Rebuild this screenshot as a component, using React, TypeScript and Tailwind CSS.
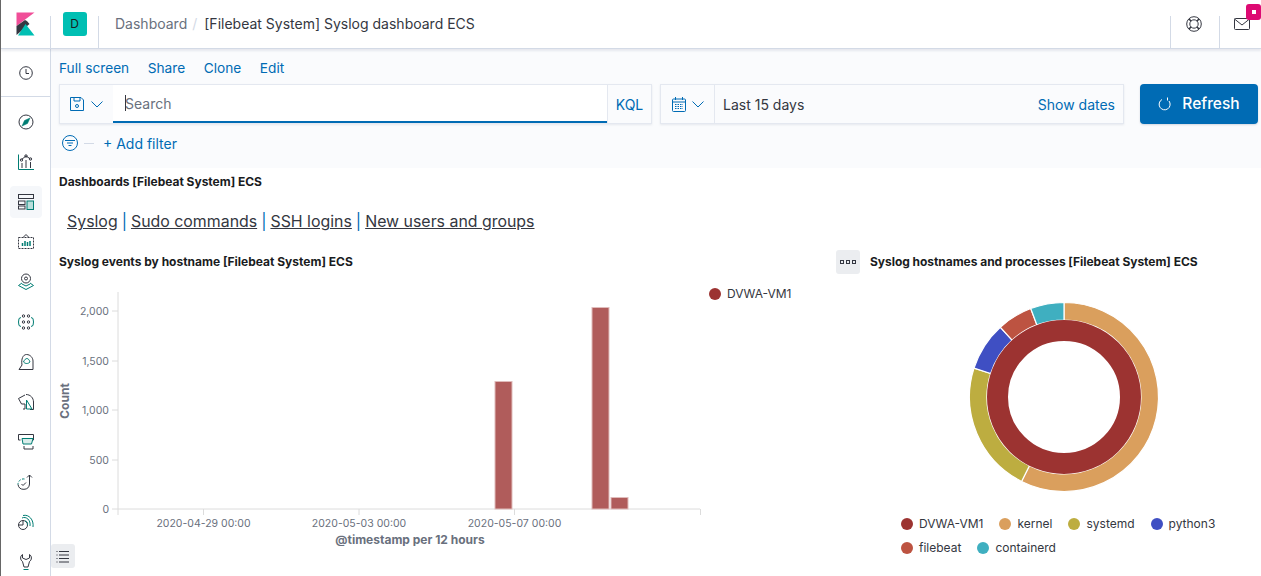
import React from 'react';

const D = '#343741';
const T = '#017d73';

const Icon: React.FC<{ children: React.ReactNode; size?: number }> = ({ children, size = 18 }) => (
  <svg width={size} height={size} viewBox="0 0 18 18" fill="none" stroke={D} strokeWidth="1">
    {children}
  </svg>
);

const navIcons: React.ReactNode[] = [
  <>
    <circle cx="9" cy="9" r="7" />
    <path d="M13 5 L10.5 10.5 L5 13 L7.5 7.5 Z" fill={T} stroke={T} strokeWidth="0.5" />
  </>,
  <>
    <path d="M1.5 1.5 V16.5 H17" stroke={T} />
    <path d="M4.5 6.5 L9 3 L13.5 6" />
    <circle cx="4.5" cy="7" r="1.2" />
    <circle cx="9" cy="3" r="1.2" />
    <circle cx="13.5" cy="6" r="1.2" />
    <path d="M5 10 V15 M9 7 V15 M13.5 9 V15" />
  </>,
  <>
    <rect x="1.5" y="1.5" width="15" height="4" />
    <rect x="1.5" y="8" width="6.5" height="3.5" />
    <rect x="1.5" y="13" width="6.5" height="3" />
    <rect x="10" y="8" width="6.5" height="8.5" stroke={T} fill="#b9dedb" />
  </>,
  <>
    <path d="M1.5 4.5 H16.5 V15.5 H1.5 Z" strokeDasharray="2 1" />
    <path d="M6 4.5 L9 1.5 L12 4.5" />
    <path d="M5.5 13 V10 M8 13 V8 M10.5 13 V9 M13 13 V8" stroke={T} strokeWidth="1.5" />
  </>,
  <>
    <circle cx="9" cy="5.5" r="4.5" />
    <circle cx="9" cy="5.5" r="1.5" />
    <path d="M5 10 L1.5 12.5 L9 16.5 L16.5 12.5 L13 10" stroke={T} />
    <path d="M5 11 L9 13 L13 11" stroke={T} />
  </>,
  <>
    <circle cx="6.5" cy="3" r="1.2" />
    <circle cx="11.5" cy="3" r="1.2" />
    <circle cx="6.5" cy="9" r="1.2" />
    <circle cx="11.5" cy="9" r="1.2" />
    <circle cx="6.5" cy="15" r="1.2" />
    <circle cx="11.5" cy="15" r="1.2" />
    <path d="M4 4.5 L2 5.5 Q1 9 2 12.5 L4 13.5 M14 4.5 L16 5.5 Q17 9 16 12.5 L14 13.5" stroke={T} />
  </>,
  <>
    <path d="M2 16.5 L5 12 C4 6 6 1.5 9.5 1.5 C13.5 1.5 16 5 16 8 V16.5 Z" />
    <path d="M6.5 9 C7.5 6.5 9 5.5 10 5.5 C11 5.5 12.5 7 13 9 C11 11 8.5 11 6.5 9 Z" stroke={T} />
  </>,
  <>
    <path d="M9 1.5 C13.5 1.5 16.5 5 16.5 9 V16.5 H13" />
    <path d="M8 2 L1.5 5.5 L4.5 11 L8 11 V16 H6" />
    <path d="M9.5 7 L15 16 H9.5 Z" stroke={T} />
  </>,
  <>
    <path d="M3.5 7 H1.5 V1.5 H16.5 V7 H15" />
    <path d="M5 5.5 H16 L14.5 11 H6 Z" stroke={T} fill="#d9ecea" />
    <path d="M7 13 V16 H16 V13" />
  </>,
  <>
    <path d="M7.5 6 A5.5 5.5 0 0 0 1 11.5" stroke={T} strokeDasharray="2.5 1.5" />
    <path d="M12.5 2 V11 A5.8 5.8 0 0 1 1 11.5" />
    <path d="M10 4.5 L12.5 2 L15 4.5" />
    <path d="M4.5 11 L6 12.5 L9 9.5" />
  </>,
  <>
    <circle cx="6" cy="12" r="4.5" />
    <path d="M6 7.5 V12 H1.5" />
    <path d="M5 5 C9 3 14 7 13 13" stroke={T} />
    <path d="M6 2.5 C12 1 17 7 16 14" stroke={T} />
    <path d="M8 8 C10 8 11 10 10.5 12" stroke={T} />
  </>,
  <>
    <path d="M5.5 1.5 C3 3 3 7 5.5 8.5 L7 14 H11 L12.5 8.5 C15 7 15 3 12.5 1.5 V5 L9 6.5 L5.5 5 Z" />
    <path d="M6.5 16.5 H11.5" stroke={T} />
  </>,
];

const ListIcon = () => (
  <svg width="14" height="14" viewBox="0 0 14 14" stroke={D} strokeWidth="1">
    <path d="M3 2.5 H13 M3 6 H13 M3 9.5 H13 M3 13 H13" />
    <path d="M0.5 2.5 H1.5 M0.5 6 H1.5 M0.5 9.5 H1.5 M0.5 13 H1.5" />
  </svg>
);

const Chevron: React.FC = () => (
  <svg width="12" height="7" viewBox="0 0 12 7" fill="none" stroke="#006bb4" strokeWidth="1">
    <path d="M0.5 0.5 L6 6 L11.5 0.5" />
  </svg>
);

const polar = (r: number, deg: number) => {
  const a = ((deg - 90) * Math.PI) / 180;
  return `${(100 + r * Math.cos(a)).toFixed(2)} ${(100 + r * Math.sin(a)).toFixed(2)}`;
};

const arc = (r0: number, r1: number, from: number, to: number) => {
  const large = to - from > 180 ? 1 : 0;
  return `M${polar(r1, from)} A${r1} ${r1} 0 ${large} 1 ${polar(r1, to)} L${polar(r0, to)} A${r0} ${r0} 0 ${large} 0 ${polar(r0, from)} Z`;
};

const segments = [
  { from: 0, to: 206.7, color: '#da9f5d' },
  { from: 206.7, to: 287.8, color: '#bdad40' },
  { from: 287.8, to: 317.6, color: '#3f4fc3' },
  { from: 317.6, to: 339.4, color: '#bd5341' },
  { from: 339.4, to: 360, color: '#3fafc0' },
];

const legend = [
  { name: 'DVWA-VM1', color: '#9c3331' },
  { name: 'kernel', color: '#da9f5d' },
  { name: 'systemd', color: '#bdad40' },
  { name: 'python3', color: '#3f4fc3' },
  { name: 'filebeat', color: '#bd5341' },
  { name: 'containerd', color: '#3fafc0' },
];

const BarChart = () => {
  const axis = '#dcdcdc';
  const label = { fontSize: 10.5, fill: '#69707d' };
  return (
    <svg width="690" height="270" viewBox="51 276 690 270" className="block" fontFamily="Inter, sans-serif">
      <path d="M118 292 V515 M112 311 H118 M112 361 H118 M112 410 H118 M112 460 H118 M112 509 H700 M203.5 509 V515 M359 509 V515 M514.5 509 V515 M700.5 509 V515" stroke={axis} fill="none" />
      {[['2,000', 311], ['1,500', 361], ['1,000', 410], ['500', 460], ['0', 509]].map(([t, y]) => (
        <text key={t} x="109" y={Number(y) + 4} textAnchor="end" {...label}>{t}</text>
      ))}
      {[['2020-04-29 00:00', 203.5], ['2020-05-03 00:00', 359], ['2020-05-07 00:00', 514.5]].map(([t, x]) => (
        <text key={t} x={x} y="527" textAnchor="middle" {...label}>{t}</text>
      ))}
      <text x="410" y="544" textAnchor="middle" fontSize="12" fontWeight="700" fill="#69707d">@timestamp per 12 hours</text>
      <text transform="translate(69 401) rotate(-90)" textAnchor="middle" fontSize="12" fontWeight="700" fill="#69707d">Count</text>
      <g fill="#b05c5b" stroke="#e0bcbb">
        <rect x="495" y="381.5" width="17" height="127.5" />
        <rect x="592" y="307.5" width="17" height="201.5" />
        <rect x="611" y="497.5" width="17" height="11.5" />
      </g>
    </svg>
  );
};

export default function App() {
  return (
    <div className="w-[1261px] h-[576px] overflow-hidden flex flex-col bg-white text-[14px] text-[#343741] font-['Inter',sans-serif] border-l border-[#666] relative">
      <header className="h-[49px] shrink-0 flex border-b border-[#d3dae6] shadow-[0_2px_2px_rgba(152,162,179,0.2)] relative z-10 bg-white">
        <div className="w-[50px] flex items-center justify-center border-r border-[#d3dae6] mt-[16px] pb-[16px]">
          <svg width="19" height="24" viewBox="0 0 19 24" className="-mt-[1px]">
            <path d="M0.5 0.5 H18.5 L0.5 14 Z" fill="#f04e98" />
            <path d="M0.5 14 L9 8 C11 9 12.5 10.5 13.5 12 L0.5 23 Z" fill="#343741" />
            <path d="M2 23.5 L9.5 12 L18.5 23.5 Z" fill="#00bfb3" />
          </svg>
        </div>
        <div className="w-[48px] flex items-center justify-center border-r border-[#d3dae6] mt-[16px] pb-[16px]">
          <div className="w-6 h-6 shrink-0 rounded-[3px] bg-[#00bfb3] flex items-center justify-center text-[12px] text-[#1a1c21] -mt-[1px]">D</div>
        </div>
        <div className="flex items-center pl-[16px] pb-[1px]">
          <span className="text-[#69707d]">Dashboard</span>
          <span className="text-[#d3dae6] ml-[5px]">/</span>
          <span className="ml-[7px]">[Filebeat System] Syslog dashboard ECS</span>
        </div>
        <div className="ml-auto flex">
          <div className="w-[49px] flex items-center justify-center border-l border-[#d3dae6] mt-[16px] pb-[16px]">
            <svg width="16" height="16" viewBox="0 0 16 16" fill="none" stroke={D} strokeWidth="1" className="-ml-[3px]">
              <circle cx="8" cy="8" r="7.3" />
              <circle cx="8" cy="8" r="4.2" />
              <path d="M3 3 L5 5 M13 3 L11 5 M3 13 L5 11 M13 13 L11 11" strokeWidth="1.6" />
            </svg>
          </div>
          <div className="w-[42px] flex pl-[14px] border-l border-[#d3dae6] mt-[16px] pt-[2px] relative">
            <svg width="16" height="12" viewBox="0 0 16 12" fill="none" stroke={D} strokeWidth="1">
              <rect x="0.5" y="0.5" width="15" height="11" rx="1" />
              <path d="M0.5 1 L8 7 L15.5 1" />
            </svg>
          </div>
        </div>
        <div className="absolute right-0 top-[4px] w-[15px] h-[16px] rounded-[3px] bg-[#dd0a73] flex items-center justify-center">
          <div className="w-[4px] h-[4px] bg-white" />
        </div>
      </header>

      <div className="flex flex-1 min-h-0">
        <aside className="w-[50px] shrink-0 border-r border-[#d3dae6]">
          <div className="h-[48px] flex items-center justify-center border-b border-[#d3dae6]">
            <svg width="14" height="14" viewBox="0 0 14 14" fill="none" stroke={D} strokeWidth="1">
              <circle cx="7" cy="7" r="6.3" />
              <path d="M7 3 V7.5 H10" />
            </svg>
          </div>
          <div className="pt-[5px] flex flex-col">
            {navIcons.map((icon, i) => (
              <div key={i} className="h-10 flex items-center justify-center">
                <div className={`w-8 h-8 rounded-[4px] flex items-center justify-center ${i === 2 ? 'bg-[#f5f7fa]' : ''}`}>
                  <Icon>{icon}</Icon>
                </div>
              </div>
            ))}
          </div>
        </aside>

        <main className="flex-1 min-w-0 flex flex-col">
          <div className="h-[119px] shrink-0 bg-[#fafbfd] pl-[8px] pr-[2px]">
            <div className="flex gap-[18.5px] pt-[9px] h-[35px] text-[13.7px] text-[#006bb4]">
              <span>Full screen</span>
              <span>Share</span>
              <span>Clone</span>
              <span>Edit</span>
            </div>
            <div className="flex">
              <div className="w-[593px] h-[40px] shrink-0 flex border border-[#e4e8f0] shadow-[0_1px_2px_rgba(152,162,179,0.2)]">
                <div className="w-[53px] flex items-center justify-center gap-[7px] pr-[1px]">
                  <svg width="14" height="14" viewBox="0 0 14 14" fill="none" stroke="#006bb4" strokeWidth="1">
                    <path d="M0.5 0.5 H11 L13.5 3 V13.5 H0.5 Z" />
                    <path d="M4 0.5 V4 H10 V0.5" />
                    <circle cx="7" cy="9" r="1.5" />
                  </svg>
                  <Chevron />
                </div>
                <div className="flex-1 bg-white border-b-2 border-[#006bb4] flex items-center pl-[12px] relative">
                  <span className="absolute left-[12px] top-[10px] w-px h-[16px] bg-[#343741]" />
                  <span className="text-[#69707d]">Search</span>
                </div>
                <div className="w-[44px] flex items-center justify-center text-[#006bb4] border-l border-[#e4e8f0]">KQL</div>
              </div>
              <div className="w-[464px] h-[40px] shrink-0 ml-[8px] flex items-center border border-[#e4e8f0] shadow-[0_1px_2px_rgba(152,162,179,0.2)]">
                <div className="w-[54px] h-full flex items-center justify-center gap-[6px] border-r border-[#e4e8f0]">
                  <svg width="14" height="15" viewBox="0 0 14 15" fill="none" stroke="#006bb4" strokeWidth="1">
                    <rect x="0.5" y="2" width="13" height="12.5" rx="1" />
                    <path d="M0.5 5 H13.5 M3.5 0 V3 M10.5 0 V3" />
                    <path d="M3 7.5 H11 M3 9.5 H11 M3 11.5 H11" strokeDasharray="1.5 1" />
                  </svg>
                  <Chevron />
                </div>
                <span className="pl-[8px]">Last 15 days</span>
                <span className="ml-auto pr-[8px] text-[#006bb4]">Show dates</span>
              </div>
              <div className="w-[118px] h-[40px] shrink-0 ml-[16px] rounded-[4px] bg-[#006bb4] text-white flex items-center justify-center gap-[11px] text-[15.5px] font-medium shadow-[0_1px_2px_rgba(152,162,179,0.4)]">
                <svg width="13" height="14" viewBox="0 0 13 14" fill="none" stroke="#fff" strokeWidth="1">
                  <path d="M4 2.5 A5.5 5.5 0 1 0 11 4 M9.5 0.5 V3.5" />
                </svg>
                <span>Refresh</span>
              </div>
            </div>
            <div className="flex items-center h-[20px] mt-[9px] pl-[3px] text-[#006bb4]">
              <svg width="16" height="16" viewBox="0 0 16 16" fill="none" stroke="#006bb4" strokeWidth="1">
                <circle cx="8" cy="8" r="7.5" />
                <path d="M3 5.5 H13 M5 8 H11 M6.5 10.5 H9.5" />
              </svg>
              <span className="w-[10px] h-px bg-[#d3dae6] ml-[6px]" />
              <span className="ml-[9px]">+ Add filter</span>
            </div>
          </div>

          <div className="px-[8px] pt-[6px] h-[82px] shrink-0">
            <div className="text-[12px] font-bold text-[#1a1c21] leading-[16px] tracking-[-0.02px]">Dashboards [Filebeat System] ECS</div>
            <div className="pl-[8px] pt-[20px] text-[15.9px] leading-[24px] flex">
              <span className="underline text-[#343741]">Syslog</span>
              <span className="ml-[4px] mr-[4px] text-[#006bb4]">|</span>
              <span className="underline">Sudo commands</span>
              <span className="ml-[4px] mr-[4px] text-[#006bb4]">|</span>
              <span className="underline">SSH logins</span>
              <span className="ml-[4px] mr-[4px] text-[#006bb4]">|</span>
              <span className="underline">New users and groups</span>
            </div>
          </div>

          <div className="flex flex-1 min-h-0">
            <section className="w-[785px] shrink-0 relative">
              <div className="pl-[8px] text-[12px] font-bold text-[#1a1c21] leading-[16px] h-[24px] flex items-center">Syslog events by hostname [Filebeat System] ECS</div>
              <div className="flex mt-[2px]">
                <BarChart />
                <div className="flex items-center h-[18px] ml-[-32px] mt-[9px] gap-[6px] text-[12px]">
                  <span className="w-[12px] h-[12px] rounded-full bg-[#9c3331]" />
                  <span>DVWA-VM1</span>
                </div>
              </div>
              <div className="absolute left-0 bottom-[8px] w-[24px] h-[24px] rounded-[3px] bg-[#ebedf0] flex items-center justify-center">
                <ListIcon />
              </div>
            </section>
            <section className="flex-1 min-w-0">
              <div className="flex items-center h-[24px] gap-[10px]">
                <div className="w-[24px] h-[24px] rounded-[3px] bg-[#ebedf0] flex items-center justify-center gap-[2px]">
                  <span className="w-[4px] h-[4px] border border-[#343741]" />
                  <span className="w-[4px] h-[4px] border border-[#343741]" />
                  <span className="w-[4px] h-[4px] border border-[#343741]" />
                </div>
                <span className="text-[12px] font-bold text-[#1a1c21] tracking-[-0.04px]">Syslog hostnames and processes [Filebeat System] ECS</span>
              </div>
              <div className="pl-[30px] flex justify-center mt-[23px]">
                <svg width="200" height="200" viewBox="0 0 200 200">
                  {segments.map((s) => (
                    <path key={s.color} d={arc(77, 94.5, s.from, s.to)} fill={s.color} stroke="#fff" strokeWidth="1.2" />
                  ))}
                  <circle cx="100" cy="100" r="66.5" fill="none" stroke="#9c3331" strokeWidth="21" />
                </svg>
              </div>
              <div className="ml-[65px] mt-[18px] w-[330px] flex flex-wrap gap-x-[16px] gap-y-[6px] text-[12px] leading-[18px]">
                {legend.map((l) => (
                  <div key={l.name} className="flex items-center gap-[6px]">
                    <span className="w-[12px] h-[12px] rounded-full" style={{ background: l.color }} />
                    <span>{l.name}</span>
                  </div>
                ))}
              </div>
            </section>
          </div>
        </main>
      </div>
    </div>
  );
}
